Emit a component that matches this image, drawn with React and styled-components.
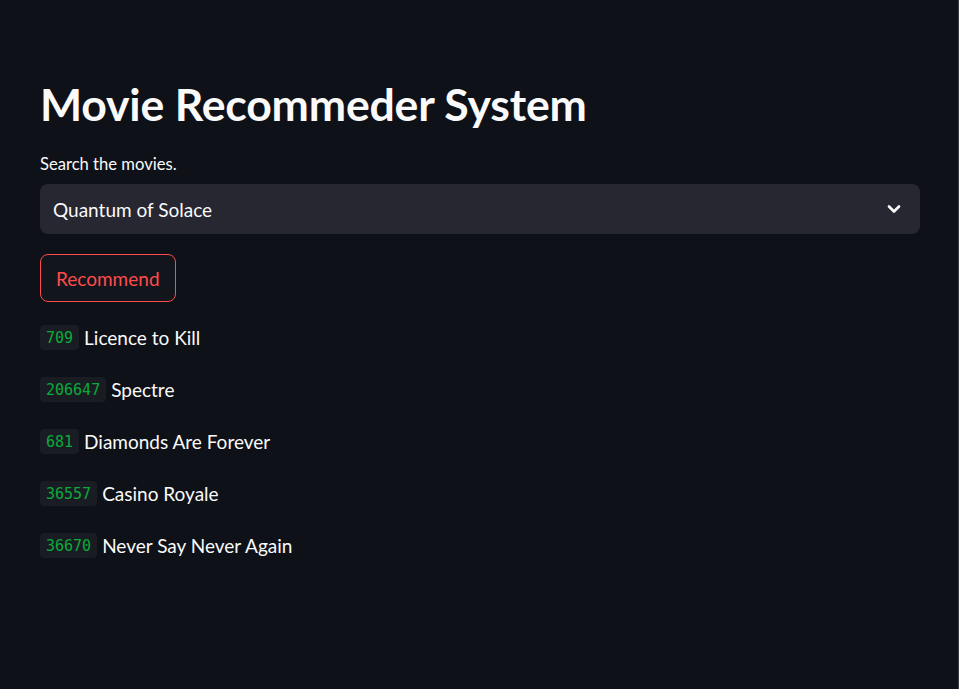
import React from 'react'
import styled, { createGlobalStyle } from 'styled-components'

const movies = [
  { id: '709', title: 'Licence to Kill' },
  { id: '206647', title: 'Spectre' },
  { id: '681', title: 'Diamonds Are Forever' },
  { id: '36557', title: 'Casino Royale' },
  { id: '36670', title: 'Never Say Never Again' },
]

export default function App() {
  return (
    <>
      <GlobalStyle />
      <Page>
        <Main>
          <Title>Movie Recommeder System</Title>

          {/* SELECT */}
          <Label>Search the movies.</Label>
          <SelectBox>
            <SelectValue>Quantum of Solace</SelectValue>
            <Chevron viewBox="0 0 24 24">
              <path d="M6 9l6 6 6-6" fill="none" stroke="#fafafa" strokeWidth="3.2" strokeLinecap="round" strokeLinejoin="round" />
            </Chevron>
          </SelectBox>

          <RecommendButton>Recommend</RecommendButton>

          {/* RESULTS */}
          <Results>
            {movies.map(m => (
              <ResultRow key={m.id}>
                <Code>{m.id}</Code>
                <MovieTitle>{m.title}</MovieTitle>
              </ResultRow>
            ))}
          </Results>
        </Main>
      </Page>
    </>
  )
}

const GlobalStyle = createGlobalStyle`
  html, body {
    margin: 0;
    padding: 0;
    background: #0e1117;
  }
  body {
    font-family: "Lato", "Noto Sans", sans-serif;
    color: #fafafa;
  }
`

const Page = styled.div`
  min-height: 689px;
  background: #0e1117;
  border-right: 1px solid #3a3d45;
  box-sizing: border-box;
`

const Main = styled.div`
  padding: 76px 38px 0 40px;
`

const Title = styled.h1`
  margin: 0;
  font-size: 44.6px;
  font-weight: 700;
  line-height: 56px;
  letter-spacing: -0.2px;
`

const Label = styled.div`
  margin-top: 22px;
  font-size: 16.6px;
  line-height: 20px;
`

const SelectBox = styled.div`
  margin-top: 10px;
  height: 50px;
  background: #262730;
  border-radius: 8px;
  display: flex;
  align-items: center;
  justify-content: space-between;
  padding: 0 16px 0 13px;
`

const SelectValue = styled.span`
  font-size: 19px;
`

const Chevron = styled.svg`
  width: 20px;
  height: 20px;
`

const RecommendButton = styled.button`
  margin-top: 20px;
  height: 48px;
  padding: 0 15px;
  background: #12151c;
  color: #ff4b4b;
  border: 1px solid #ff4b4b;
  border-radius: 8px;
  font-family: "Lato", "Noto Sans", sans-serif;
  font-size: 19px;
  display: block;
`

const Results = styled.div`
  margin-top: 23px;
  display: flex;
  flex-direction: column;
  gap: 28px;
`

const ResultRow = styled.div`
  display: flex;
  align-items: center;
  gap: 5px;
  height: 24px;
`

const Code = styled.code`
  display: flex;
  align-items: center;
  box-sizing: border-box;
  height: 25px;
  padding: 3px 6px 0 6px;
  background: #1a1c23;
  color: #09ab3b;
  font-family: "DejaVu Sans Mono", "Liberation Mono", monospace;
  font-size: 15px;
  line-height: 1;
  border-radius: 4px;
`

const MovieTitle = styled.span`
  font-size: 19px;
`
